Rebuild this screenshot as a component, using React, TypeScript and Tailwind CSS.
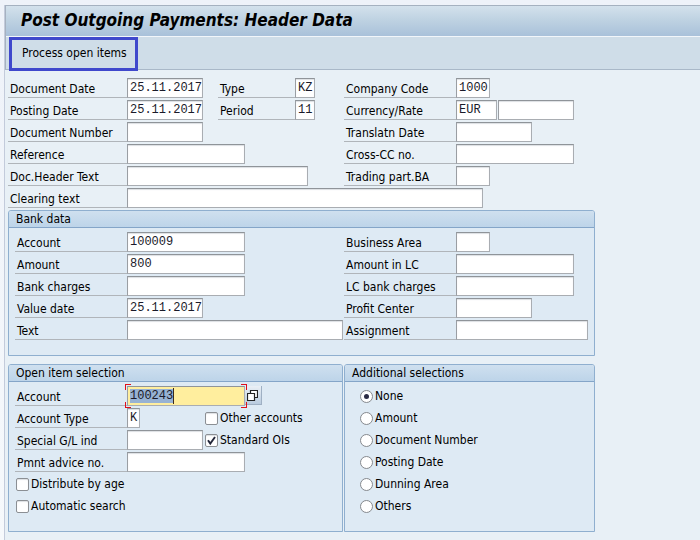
import React, { useId } from 'react';
import clsx from 'clsx';

const additionalSelections = [
    'None',
    'Amount',
    'Document Number',
    'Posting Date',
    'Dunning Area',
    'Others',
];

const inputBase =
    'h-5 min-w-0 shrink-0 border border-[#a9adb2] border-t-[#8f9499] border-l-[#9a9ea3] pl-0.5 font-["Liberation_Mono",monospace] text-xs text-[#1a1a2a] outline-none';

type FieldProps = {
    label: string;
    labelWidth: string;
    width: string;
    value?: string;
    children?: React.ReactNode;
};

function Field({ label, labelWidth, width, value = '', children }: FieldProps) {
    const id = useId();

    return (
        <div className="flex h-5">
            <FieldLabel htmlFor={id} className={labelWidth}>{label}</FieldLabel>
            <input
                id={id}
                type="text"
                defaultValue={value}
                className={clsx(inputBase, 'bg-white shadow-[inset_0_1px_1px_#dcdfe3]', width)}
            />
            {children}
        </div>
    );
}

function FieldLabel({ htmlFor, className, children }: { htmlFor: string; className: string; children: React.ReactNode }) {
    return (
        <label
            htmlFor={htmlFor}
            className={clsx('h-5 shrink-0 border-b border-[#b0b5ba] pl-0.5 leading-[22px] whitespace-nowrap', className)}
        >
            {children}
        </label>
    );
}

function Checkbox({ label, checked = false }: { label: string; checked?: boolean }) {
    return (
        <label className="flex h-5 items-center gap-0.5 leading-[22px] whitespace-nowrap">
            <span className="relative flex">
                <input
                    type="checkbox"
                    defaultChecked={checked}
                    className="peer size-[13px] appearance-none rounded-xs border border-[#8b8f94] bg-white shadow-[inset_0_1px_1px_#dcdfe3]"
                />
                <svg
                    viewBox="0 0 13 13"
                    className="pointer-events-none absolute inset-0 hidden size-[13px] peer-checked:block"
                    aria-hidden="true"
                >
                    <path d="M3 6.2 L5.3 9.6 L10 3" fill="none" stroke="#22263a" strokeWidth="1.9" />
                </svg>
            </span>
            {label}
        </label>
    );
}

function Radio({ label, checked = false }: { label: string; checked?: boolean }) {
    return (
        <label className="flex h-5 items-center gap-0.5 leading-[22px]">
            <span className="relative flex">
                <input
                    type="radio"
                    name="additional"
                    defaultChecked={checked}
                    className="peer size-[13px] appearance-none rounded-full border border-[#85898e] bg-white"
                />
                <span className="pointer-events-none absolute inset-1 hidden rounded-full bg-[#2b2c45] peer-checked:block" />
            </span>
            {label}
        </label>
    );
}

function Group({ title, className, children }: { title: string; className?: string; children: React.ReactNode }) {
    return (
        <section className={clsx('rounded-t-[3px] border border-[#8fafcf] bg-[#deeaf4]', className)}>
            <h2 className="h-[17px] rounded-t-xs border-b border-[#84a5c8] bg-linear-to-b from-[#cfe0ef] to-[#bdd4e9] pl-[7px] leading-4">
                {title}
            </h2>
            {children}
        </section>
    );
}

// Highlighted account field with the red focus corners and the search help button
function FocusedAccount() {
    const id = useId();

    return (
        <div className="flex h-5">
            <FieldLabel htmlFor={id} className="w-28">Account</FieldLabel>
            <div className="relative">
                <input
                    id={id}
                    type="text"
                    defaultValue="100243"
                    autoFocus
                    onFocus={(e) => e.target.select()}
                    className={clsx(inputBase, 'block w-[118px] bg-[#ffee9e] leading-4 selection:bg-[#97b2d3] selection:text-[#1a1a2a]')}
                />
                <span className="pointer-events-none absolute top-0.5 left-[46px] h-4 w-px bg-[#3c2a1e]" />
                <span className="pointer-events-none absolute -top-0.5 -left-0.5 z-10 size-[6px] border-t border-l border-[#e0101a]" />
                <span className="pointer-events-none absolute -top-0.5 -right-0.5 z-10 size-[6px] border-t border-r border-[#e0101a]" />
                <span className="pointer-events-none absolute -bottom-0.5 -left-0.5 z-10 size-[6px] border-b border-l border-[#e0101a]" />
                <span className="pointer-events-none absolute -right-0.5 -bottom-0.5 z-10 size-[6px] border-r border-b border-[#e0101a]" />
            </div>
            <button
                type="button"
                aria-label="Search help"
                className="flex h-[19px] w-[17px] items-center border-r border-b border-[#9fb0c3] bg-linear-to-b from-[#eaf0f6] to-[#b9cbde] pl-0.5"
            >
                <svg viewBox="0 0 11 11" className="size-[11px]" aria-hidden="true">
                    <path d="M3.5 .5 H10.5 V7.5 H3.5 Z" fill="#fff" stroke="#222" strokeWidth="1.2" />
                    <path d="M.5 3.5 H7.5 V10.5 H.5 Z" fill="#fff" stroke="#222" strokeWidth="1.2" />
                </svg>
            </button>
        </div>
    );
}

export default function App() {
    return (
        <div className="min-h-screen bg-linear-to-b from-[#eef2f9] to-[#f6f9fc] pt-[5px] pl-1 font-['DejaVu_Sans_Condensed','DejaVu_Sans',sans-serif] text-xs text-black">
            <div className="min-h-[calc(100vh-5px)] border-l border-[#c3cbdb] bg-[#e8f0f6]">

                {/* Title and toolbar */}
                <header className="border-t border-b border-l border-[#a5b1c0] border-b-[#a9b8c8]">
                    <h1 className="h-[31px] border-b border-[#f2f6fa] bg-linear-to-b from-[#d3e1ec] via-[#bdd1e1] to-[#a9c1da] pl-[15px] text-[17px] leading-7 font-bold italic">
                        Post Outgoing Payments: Header Data
                    </h1>
                    <div className="h-8 bg-[#cfdde8] pl-[3px]">
                        <button
                            type="button"
                            className="h-[34px] border-3 border-[#3f48cc] pr-2 pb-0.5 pl-[10px] whitespace-nowrap"
                        >
                            Process open items
                        </button>
                    </div>
                </header>

                <form className="max-w-[590px] pt-2 pl-[3px]">

                    {/* Document header */}
                    <div className="grid grid-cols-[336px_1fr] gap-y-0.5">
                        <div className="flex gap-[15px]">
                            <Field label="Document Date" labelWidth="w-[119px]" width="w-[76px]" value="25.11.2017" />
                            <Field label="Type" labelWidth="w-[77px]" width="w-5" value="KZ" />
                        </div>
                        <Field label="Company Code" labelWidth="w-28" width="w-[34px]" value="1000" />
                        <div className="flex gap-[15px]">
                            <Field label="Posting Date" labelWidth="w-[119px]" width="w-[76px]" value="25.11.2017" />
                            <Field label="Period" labelWidth="w-[77px]" width="w-5" value="11" />
                        </div>
                        <Field label="Currency/Rate" labelWidth="w-28" width="w-[41px]" value="EUR">
                            <input
                                type="text"
                                aria-label="Rate"
                                className={clsx(inputBase, 'ml-px w-[76px] bg-white shadow-[inset_0_1px_1px_#dcdfe3]')}
                            />
                        </Field>
                        <Field label="Document Number" labelWidth="w-[119px]" width="w-[76px]" />
                        <Field label="Translatn Date" labelWidth="w-28" width="w-[76px]" />
                        <Field label="Reference" labelWidth="w-[119px]" width="w-[118px]" />
                        <Field label="Cross-CC no." labelWidth="w-28" width="w-[118px]" />
                        <Field label="Doc.Header Text" labelWidth="w-[119px]" width="w-[181px]" />
                        <Field label="Trading part.BA" labelWidth="w-28" width="w-[34px]" />
                        <div className="col-span-2">
                            <Field label="Clearing text" labelWidth="w-[119px]" width="w-[356px]" />
                        </div>
                    </div>

                    <Group title="Bank data" className="mt-0.5">
                        <div className="grid grid-cols-[329px_1fr] gap-y-0.5 pt-1 pb-[15px] pl-1.5">
                            <Field label="Account" labelWidth="w-28" width="w-[118px]" value="100009" />
                            <Field label="Business Area" labelWidth="w-28" width="w-[34px]" />
                            <Field label="Amount" labelWidth="w-28" width="w-[118px]" value="800" />
                            <Field label="Amount in LC" labelWidth="w-28" width="w-[118px]" />
                            <Field label="Bank charges" labelWidth="w-28" width="w-[118px]" />
                            <Field label="LC bank charges" labelWidth="w-28" width="w-[118px]" />
                            <Field label="Value date" labelWidth="w-28" width="w-[76px]" value="25.11.2017" />
                            <Field label="Profit Center" labelWidth="w-28" width="w-[76px]" />
                            <Field label="Text" labelWidth="w-28" width="w-[216px]" />
                            <Field label="Assignment" labelWidth="w-28" width="w-[132px]" />
                        </div>
                    </Group>

                    <div className="mt-2 grid grid-cols-[335px_1fr] gap-px">
                        <Group title="Open item selection">
                            <div className="flex flex-col gap-0.5 pt-1 pb-[15px] pl-1.5">
                                <FocusedAccount />
                                <div className="grid grid-cols-[190px_1fr] gap-y-0.5">
                                    <Field label="Account Type" labelWidth="w-28" width="w-[13px]" value="K" />
                                    <Checkbox label="Other accounts" />
                                    <Field label="Special G/L ind" labelWidth="w-28" width="w-[76px]" />
                                    <Checkbox label="Standard OIs" checked />
                                </div>
                                <Field label="Pmnt advice no." labelWidth="w-28" width="w-[118px]" />
                                <div className="flex flex-col gap-0.5 pl-px">
                                    <Checkbox label="Distribute by age" />
                                    <Checkbox label="Automatic search" />
                                </div>
                            </div>
                        </Group>

                        <Group title="Additional selections">
                            <div className="flex flex-col gap-0.5 pt-1 pl-[15px]">
                                {additionalSelections.map((label, index) => (
                                    <Radio key={label} label={label} checked={index === 0} />
                                ))}
                            </div>
                        </Group>
                    </div>
                </form>
            </div>
        </div>
    );
}
